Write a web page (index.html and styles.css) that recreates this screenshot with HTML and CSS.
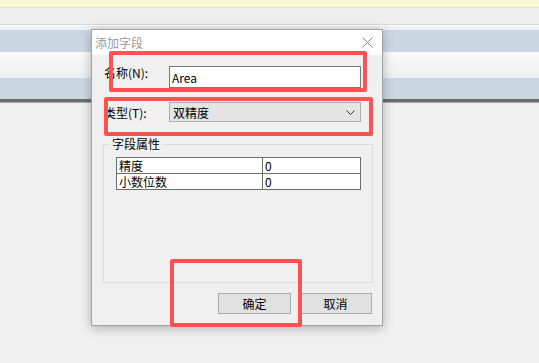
FILE: index.html
```html
<!DOCTYPE html>
<html lang="zh-CN">
<head>
    <meta charset="UTF-8">
    <meta name="viewport" content="width=device-width, initial-scale=1.0">
    <title>添加字段</title>
    <link rel="stylesheet" href="styles.css">
</head>
<body>
    <div class="infobar"></div>
    <div class="toolbar"></div>
    <div class="rows">
        <div class="row row-blue"></div>
        <div class="row row-light"></div>
        <div class="row row-blue row-last"></div>
    </div>

    <div class="dialog">
        <div class="titlebar">
            <span class="title">添加字段</span>
            <svg class="close" width="11" height="11" viewBox="0 0 11 11">
                <path d="M0.5 0.5 L10.5 10.5 M10.5 0.5 L0.5 10.5" stroke="#8a8a8a" stroke-width="1" fill="none"/>
            </svg>
        </div>
        <div class="dialog-body">
            <div class="field field-name">
                <label for="name">名称(N):</label>
                <input type="text" id="name" value="Area">
            </div>
            <div class="field field-type">
                <label for="type">类型(T):</label>
                <div class="select" id="type">
                    <span>双精度</span>
                    <svg width="9" height="5" viewBox="0 0 9 5">
                        <path d="M0.5 0.5 L4.5 4.5 L8.5 0.5" stroke="#333" stroke-width="1" fill="none"/>
                    </svg>
                </div>
            </div>

            <fieldset class="group">
                <legend>字段属性</legend>
                <table class="props">
                    <tr><td class="key">精度</td><td class="val">0</td></tr>
                    <tr><td class="key">小数位数</td><td class="val">0</td></tr>
                </table>
            </fieldset>

            <div class="buttons">
                <button type="button">确定</button>
                <button type="button">取消</button>
            </div>
        </div>
    </div>

    <!-- annotation boxes -->
    <div class="mark mark-name"></div>
    <div class="mark mark-type"></div>
    <div class="mark mark-ok"></div>
</body>
</html>
```

FILE: styles.css
```css
* {
    box-sizing: border-box;
}
body {
    margin: 0;
    background: #f0f0f0;
    font-family: "Noto Sans CJK SC", "Microsoft YaHei", sans-serif;
    font-size: 12px;
    color: #000;
    height: 363px;
    overflow: hidden;
    position: relative;
}
.infobar {
    height: 8px;
    background: #fbf6d4;
    border-bottom: 1px solid #e6e3cc;
}
.toolbar {
    height: 17px;
    background: #efefef;
    border-bottom: 1px solid #dadada;
    box-shadow: 0 1px 0 #fafafa;
}
.rows {
    margin-top: 5px;
}
.row {
    height: 22px;
}
.row-blue {
    background: #cbd8e4;
}
.row-light {
    height: 26px;
    background: linear-gradient(#fafafa, #efefef);
}
.row-last {
    height: 24px;
    border-bottom: 3px solid #6d6d6d;
    box-shadow: 0 1px 0 #a9a9a9;
}

/* dialog window */
.dialog {
    position: absolute;
    left: 91px;
    top: 29px;
    width: 292px;
    height: 297px;
    background: #f0f0f0;
    border: 1px solid #a3a3a3;
    box-shadow: 0 2px 10px rgba(0, 0, 0, 0.28);
}
.titlebar {
    height: 25px;
    background: #fff;
    display: flex;
    align-items: center;
    justify-content: space-between;
    padding: 0 9px 0 3px;
}
.title {
    color: #9b9b9b;
    font-size: 12px;
}
.dialog-body {
    padding: 0 10px 0 12px;
}
.field {
    display: flex;
    align-items: flex-start;
}
.field label {
    width: 65px;
    line-height: 14px;
}
.field-name {
    margin-top: 11px;
}
.field-name input {
    width: 192px;
    height: 22px;
    border: 1px solid #7a7a7a;
    background: #fff;
    padding: 0 2px;
    font-family: inherit;
    font-size: 12px;
    outline: none;
}
.field-type {
    margin-top: 14px;
}
.field-type label {
    margin-top: 4px;
}
.select {
    width: 192px;
    height: 20px;
    border: 1px solid #adadad;
    background: #e5e5e5;
    display: flex;
    align-items: center;
    justify-content: space-between;
    padding: 0 5px 0 3px;
}

/* group box */
.group {
    margin: 15px 0 0 -1px;
    width: 270px;
    height: 146px;
    border: 1px solid #dcdcdc;
    padding: 0 11px 0 12px;
}
.group legend {
    padding: 0 2px;
    margin-left: -6px;
    line-height: 14px;
}
.props {
    margin-top: 6px;
    width: 245px;
    border-collapse: collapse;
    background: #fff;
}
.props td {
    border: 1px solid #6d6d6d;
    height: 16px;
    padding: 0 0 0 2px;
    line-height: 14px;
}
.props .key {
    width: 146px;
}

/* buttons */
.buttons {
    display: flex;
    justify-content: flex-end;
    gap: 8px;
    margin-top: 10px;
}
.buttons button {
    width: 73px;
    height: 21px;
    border: 1px solid #adadad;
    background: #e1e1e1;
    font-family: inherit;
    font-size: 12px;
    padding: 0;
}

/* red annotation frames */
.mark {
    position: absolute;
    border: 4px solid #fd5252;
    border-radius: 2px;
}
.mark-name {
    left: 109px;
    top: 51px;
    width: 258px;
    height: 41px;
}
.mark-type {
    left: 104px;
    top: 97px;
    width: 269px;
    height: 39px;
}
.mark-ok {
    left: 170px;
    top: 259px;
    width: 132px;
    height: 68px;
}
```
